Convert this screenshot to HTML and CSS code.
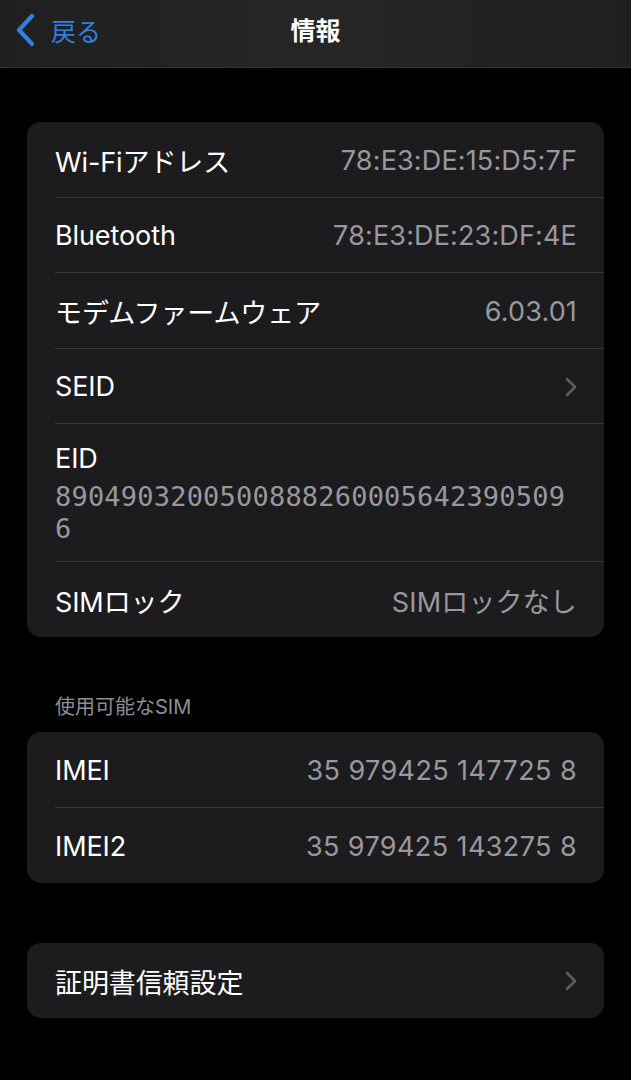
FILE: index.html
```html
<!DOCTYPE html>
<html lang="ja">
<head>
<meta charset="utf-8">
<title>情報</title>
<link rel="stylesheet" href="styles.css">
</head>
<body>
<header class="nav">
  <div class="back">
    <svg class="back-icon" width="22" height="34" viewBox="0 0 22 34"><path d="M18 3 L5 17 L18 31" fill="none" stroke="#2f80e0" stroke-width="4.2" stroke-linecap="round" stroke-linejoin="round"/></svg>
    <span class="back-text">戻る</span>
  </div>
  <div class="nav-title">情報</div>
</header>

<main class="content">
  <section class="card">
    <div class="row"><span class="label">Wi-Fiアドレス</span><span class="value">78:E3:DE:15:D5:7F</span></div>
    <div class="row"><span class="label">Bluetooth</span><span class="value">78:E3:DE:23:DF:4E</span></div>
    <div class="row"><span class="label">モデムファームウェア</span><span class="value">6.03.01</span></div>
    <div class="row"><span class="label">SEID</span><svg class="chev" width="14" height="22" viewBox="0 0 14 22"><path d="M3 3 L11 11 L3 19" fill="none" stroke="#5c5c60" stroke-width="2.6" stroke-linecap="round" stroke-linejoin="round"/></svg></div>
    <div class="row row-eid">
      <div class="label eid-label">EID</div>
      <div class="eid-value">89049032005008882600056423905096</div>
    </div>
    <div class="row"><span class="label">SIMロック</span><span class="value">SIMロックなし</span></div>
  </section>

  <div class="section-header">使用可能なSIM</div>
  <section class="card">
    <div class="row"><span class="label">IMEI</span><span class="value value-wide">35 979425 147725 8</span></div>
    <div class="row"><span class="label">IMEI2</span><span class="value value-wide">35 979425 143275 8</span></div>
  </section>

  <section class="card card-last">
    <div class="row"><span class="label">証明書信頼設定</span><svg class="chev" width="14" height="22" viewBox="0 0 14 22"><path d="M3 3 L11 11 L3 19" fill="none" stroke="#5c5c60" stroke-width="2.6" stroke-linecap="round" stroke-linejoin="round"/></svg></div>
  </section>
</main>
</body>
</html>
```

FILE: styles.css
```css
html, body {
  margin: 0;
  padding: 0;
  background: #000;
}
body {
  width: 631px;
  min-height: 1080px;
  font-family: "Inter", "Noto Sans CJK JP", sans-serif;
  color: #fff;
  overflow: hidden;
}
.nav {
  height: 67px;
  background: linear-gradient(90deg, #1f1f1f, #262626 50%, #1f1f1f);
  border-bottom: 1px solid #333;
  display: flex;
  align-items: flex-start;
  justify-content: center;
  position: relative;
}
.back {
  position: absolute;
  left: 14px;
  top: 0;
  height: 60px;
  display: flex;
  align-items: center;
  gap: 15px;
}
.back-text {
  color: #2f80e0;
  font-size: 25px;
  line-height: 58px;
  font-family: "Noto Sans CJK JP", sans-serif;
}
.nav-title {
  font-size: 25px;
  line-height: 58px;
  font-weight: 700;
  font-family: "Noto Sans CJK JP", sans-serif;
}
.content {
  padding: 54px 27px 0;
}
.card {
  background: #1c1c1e;
  border-radius: 14px;
  overflow: hidden;
}
.card + .card {
  margin-top: 60px;
}
.row {
  margin-left: 28px;
  padding-right: 27px;
  padding-top: 2px;
  display: flex;
  align-items: center;
  justify-content: space-between;
  border-bottom: 1px solid #38383a;
  box-sizing: border-box;
  height: 75.5px;
}
.row:last-child {
  border-bottom: none;
  height: 75px;
}
.label {
  font-size: 27px;
  color: #fff;
  letter-spacing: -0.1px;
}
.value {
  font-size: 27px;
  color: #98989e;
  letter-spacing: 0.15px;
}
.value-wide {
  letter-spacing: 0.4px;
}
.chev {
  margin-right: -1px;
}
.row-eid {
  height: 138px;
  display: block;
  padding-top: 18px;
  padding-bottom: 17px;
}
.eid-label {
  line-height: 34px;
  margin-bottom: 5px;
}
.eid-value {
  font-family: "DejaVu Sans Mono", monospace;
  font-size: 27px;
  line-height: 32px;
  color: #98989e;
  word-break: break-all;
  letter-spacing: 0.2px;
}
.section-header {
  margin: 58px 0 13px 28px;
  font-size: 20px;
  line-height: 24px;
  color: #8e8e93;
}
```
